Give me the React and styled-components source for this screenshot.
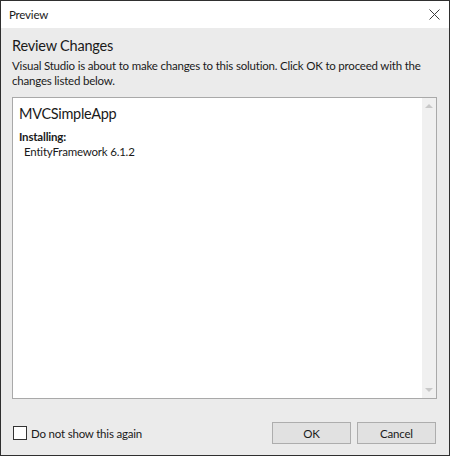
import React from "react";
import styled, { createGlobalStyle } from "styled-components";

const GlobalStyle = createGlobalStyle`
  body {
    margin: 0;
    background: #ffffff;
    font-family: Lato, "Open Sans", sans-serif;
  }
`;

const Window = styled.div`
  width: 450px;
  height: 456px;
  box-sizing: border-box;
  border: 1px solid #2f2f2f;
  display: flex;
  flex-direction: column;
  background: #ebebeb;
  color: #1a1a1a;
`;

const TitleBar = styled.div`
  height: 27px;
  flex: none;
  display: flex;
  align-items: center;
  justify-content: space-between;
  padding: 0 9px 0 8px;
  background: #ffffff;
  font-size: 11.5px;
  letter-spacing: -0.2px;
`;

const CloseButton = styled.div`
  width: 12px;
  height: 12px;
  display: flex;
  align-items: center;
  justify-content: center;
`;

const Body = styled.div`
  flex: 1;
  display: flex;
  flex-direction: column;
  padding: 8px 12px 11px 11px;
  min-height: 0;
  font-size: 11.5px;
  letter-spacing: -0.2px;
`;

const Heading = styled.div`
  font-size: 14.5px;
  line-height: 20px;
  letter-spacing: -0.2px;
`;

const Description = styled.div`
  margin-top: 2px;
  line-height: 15px;
`;

const ListBox = styled.div`
  flex: 1;
  margin-top: 9px;
  display: flex;
  background: #ffffff;
  border: 1px solid #a9a9a9;
  min-height: 0;
`;

const ListContent = styled.div`
  flex: 1;
  padding: 6px 6px;
`;

const ProjectName = styled.div`
  font-size: 14.5px;
  line-height: 20px;
  letter-spacing: -0.3px;
`;

const SectionLabel = styled.div`
  margin-top: 5px;
  line-height: 15px;
  font-weight: 700;
`;

const PackageItem = styled.div`
  padding-left: 5px;
  line-height: 15px;
`;

const ScrollTrack = styled.div`
  width: 14px;
  flex: none;
  background: #f0f0f0;
  display: flex;
  flex-direction: column;
  justify-content: space-between;
  align-items: center;
  padding: 6px 0;
`;

const Arrow = styled.div`
  width: 0;
  height: 0;
  border-left: 4px solid transparent;
  border-right: 4px solid transparent;
  ${(p) =>
    p.down
      ? "border-top: 4px solid #c8c8c8;"
      : "border-bottom: 4px solid #c8c8c8;"}
`;

const Footer = styled.div`
  margin-top: 23px;
  height: 22px;
  display: flex;
  align-items: center;
  justify-content: space-between;
`;

const CheckRow = styled.label`
  display: flex;
  align-items: center;
  gap: 4px;
  padding-left: 1px;
`;

const CheckBox = styled.span`
  width: 12px;
  height: 12px;
  border: 1px solid #333333;
  background: #ffffff;
`;

const Buttons = styled.div`
  display: flex;
  gap: 6px;
  padding-right: 1px;
`;

const Button = styled.button`
  width: 79px;
  height: 22px;
  box-sizing: border-box;
  border: 1px solid #adadad;
  background: #e1e1e1;
  font-family: inherit;
  font-size: 11.5px;
  letter-spacing: -0.2px;
  color: #1a1a1a;
  padding: 0;
`;

export default function App() {
  return (
    <>
      <GlobalStyle />
      <Window>
        <TitleBar>
          <span>Preview</span>
          <CloseButton>
            <svg width="11" height="11" viewBox="0 0 11 11">
              <path d="M0.5 0.5 L10.5 10.5 M10.5 0.5 L0.5 10.5" stroke="#3c3c3c" strokeWidth="1" />
            </svg>
          </CloseButton>
        </TitleBar>
        <Body>
          <Heading>Review Changes</Heading>
          <Description>
            Visual Studio is about to make changes to this solution. Click OK to proceed with the
            changes listed below.
          </Description>
          <ListBox>
            <ListContent>
              <ProjectName>MVCSimpleApp</ProjectName>
              <SectionLabel>Installing:</SectionLabel>
              <PackageItem>EntityFramework 6.1.2</PackageItem>
            </ListContent>
            <ScrollTrack>
              <Arrow />
              <Arrow down />
            </ScrollTrack>
          </ListBox>
          <Footer>
            <CheckRow>
              <CheckBox />
              Do not show this again
            </CheckRow>
            <Buttons>
              <Button>OK</Button>
              <Button>Cancel</Button>
            </Buttons>
          </Footer>
        </Body>
      </Window>
    </>
  );
}
